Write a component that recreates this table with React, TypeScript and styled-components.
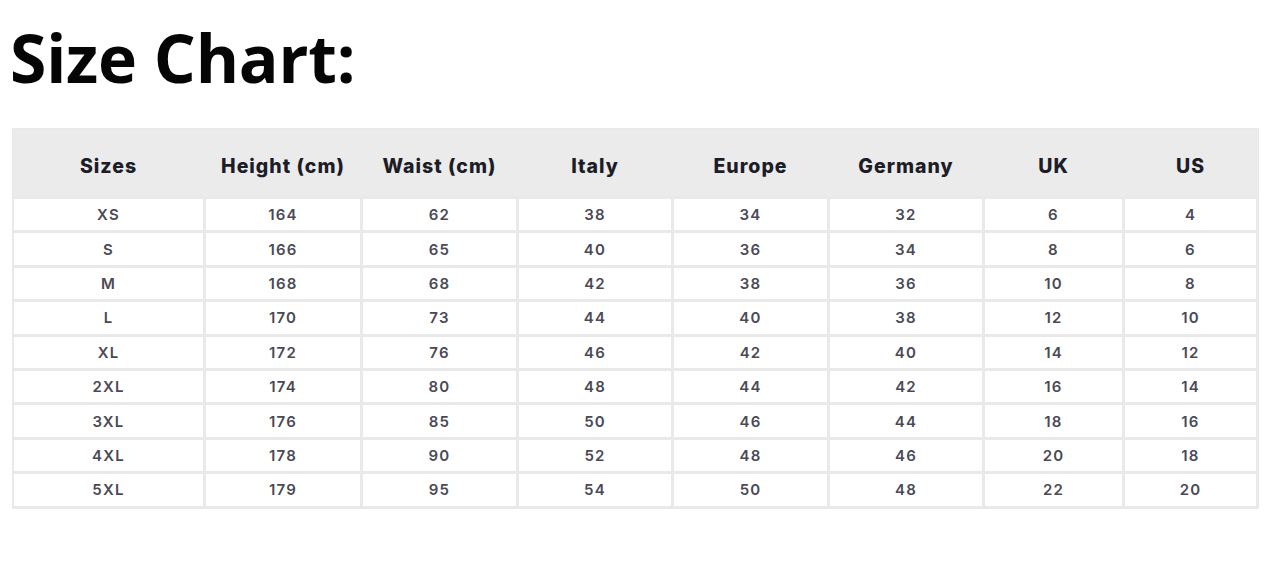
import React from "react";
import styled, { createGlobalStyle } from "styled-components";

const GlobalStyle = createGlobalStyle`
  html, body { margin: 0; padding: 0; background: #ffffff; }
  body { font-family: "Inter", "Liberation Sans", sans-serif; }
`;

const Page = styled.div`
  width: 1280px;
  height: 562px;
  box-sizing: border-box;
  padding: 16px 0 0 12px;
  background: #ffffff;
`;

const Title = styled.h1`
  margin: 0 0 0 -2px;
  font-family: "Open Sans", "Noto Sans", sans-serif;
  font-weight: 700;
  font-size: 66px;
  line-height: 82px;
  letter-spacing: -0.2px;
  color: #050505;
  height: 112px;
`;

const Grid = styled.div`
  display: grid;
  grid-template-columns: 189px 154px 153px 152px 153px 152px 137px 131px;
  grid-template-rows: 66px;
  grid-auto-rows: 31.4px;
  gap: 3px;
  padding: 2px 3px 3px 2px;
  width: max-content;
  background: #e9e9e9;
`;

const HeadCell = styled.div`
  display: flex;
  align-items: center;
  justify-content: center;
  background: #ebebeb;
  margin: 0 -1.5px;
  padding-top: 6px;
  font-family: "Inter", "Liberation Sans", sans-serif;
  font-weight: 800;
  font-size: 19.5px;
  letter-spacing: 1px;
  color: #1d1d28;
`;

const Cell = styled.div`
  display: flex;
  align-items: center;
  justify-content: center;
  background: #ffffff;
  font-family: "Inter", "Liberation Sans", sans-serif;
  font-weight: 600;
  font-size: 15px;
  letter-spacing: 1.2px;
  color: #4a4a56;
`;

const headers = ["Sizes", "Height (cm)", "Waist (cm)", "Italy", "Europe", "Germany", "UK", "US"];

const rows: (string | number)[][] = [
  ["XS", 164, 62, 38, 34, 32, 6, 4],
  ["S", 166, 65, 40, 36, 34, 8, 6],
  ["M", 168, 68, 42, 38, 36, 10, 8],
  ["L", 170, 73, 44, 40, 38, 12, 10],
  ["XL", 172, 76, 46, 42, 40, 14, 12],
  ["2XL", 174, 80, 48, 44, 42, 16, 14],
  ["3XL", 176, 85, 50, 46, 44, 18, 16],
  ["4XL", 178, 90, 52, 48, 46, 20, 18],
  ["5XL", 179, 95, 54, 50, 48, 22, 20],
];

export default function App() {
  return (
    <>
      <GlobalStyle />
      <Page>
        <Title>Size Chart:</Title>
        <Grid>
          {headers.map((h) => (
            <HeadCell key={h}>{h}</HeadCell>
          ))}
          {rows.map((r) =>
            r.map((v, i) => <Cell key={`${r[0]}-${i}`}>{v}</Cell>)
          )}
        </Grid>
      </Page>
    </>
  );
}
